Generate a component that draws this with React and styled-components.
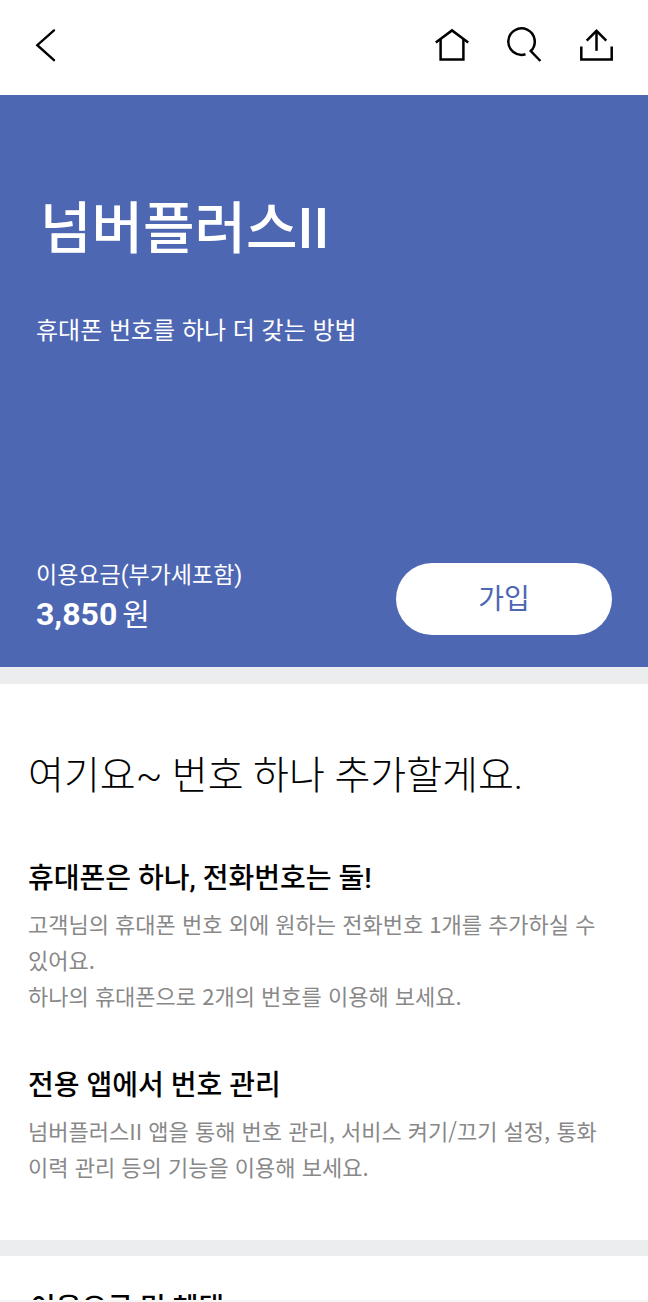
import React, { useState } from "react";
import styled, { createGlobalStyle } from "styled-components";

const GlobalStyle = createGlobalStyle`
  * {
    box-sizing: border-box;
  }
  body {
    margin: 0;
    background-color: #fff;
    color: #000;
    font-family: Roboto, "Noto Sans CJK KR", sans-serif;
    word-break: keep-all;
  }
  h1, h2, h3, p, dl, dd {
    margin: 0;
  }
  p {
    font-family: "Noto Sans CJK KR", sans-serif;
  }
`;

const Screen = styled.div`
  display: flex;
  flex-direction: column;
  height: 100vh;
`;

const TopBar = styled.header`
  display: flex;
  flex-shrink: 0;
  align-items: center;
  justify-content: space-between;
  height: 95px;
  padding: 0 32px 5px 24px;
`;

const TopMenu = styled.nav`
  display: flex;
  gap: 32px;
`;

const IconButton = styled.button`
  display: flex;
  padding: 0;
  border: 0;
  background: none;
  color: #000;
  cursor: pointer;
`;

const Icon = styled.svg`
  display: block;
  width: 40px;
  height: 40px;
  fill: none;
  stroke: currentColor;
  stroke-width: ${({ $weight }) => $weight || 2.5};
`;

const Content = styled.main`
  flex: 1;
  min-height: 0;
  overflow-y: auto;
  scrollbar-width: none;
`;

const BottomEdge = styled.footer`
  flex-shrink: 0;
  height: 2px;
  background-color: #f5f5f5;
`;

const Hero = styled.section`
  display: flex;
  flex-direction: column;
  justify-content: space-between;
  min-height: 572px;
  padding: 92px 36px 30px;
  background-color: #4d67b3;
  color: #fff;
`;

const HeroTitle = styled.h1`
  padding: 0 4px;
  font-size: 56px;
  font-weight: 500;
  line-height: 84px;
`;

const HeroText = styled.p`
  margin-top: 40px;
  font-size: 24px;
  line-height: 36px;
`;

const JoinRow = styled.div`
  display: flex;
  align-items: center;
  justify-content: space-between;
`;

const PriceLabel = styled.dt`
  font-size: 23px;
  line-height: 32px;
`;

const Price = styled.dd`
  font-size: 30px;
  line-height: 44px;

  strong {
    margin-right: 5px;
    font-size: 32px;
    font-weight: 700;
  }
`;

const JoinButton = styled.button`
  width: 216px;
  height: 72px;
  padding: 0 0 4px;
  border: 0;
  border-radius: 36px;
  background-color: #fff;
  color: #4d67b3;
  font-family: inherit;
  font-size: 28px;
  cursor: pointer;
`;

const Divider = styled.div`
  height: ${({ $height }) => $height}px;
  background-color: #ebedee;
`;

const Intro = styled.section`
  padding: 62px 28px 56px;
`;

const IntroTitle = styled.h2`
  font-size: 39px;
  font-weight: 300;
  line-height: 60px;
`;

const Feature = styled.article`
  margin-top: 53px;
`;

const FeatureTitle = styled.h3`
  font-size: 28px;
  font-weight: 500;
  line-height: 40px;
`;

const FeatureText = styled.p`
  margin-top: 6px;
  color: #888;
  font-size: 22px;
  line-height: 36px;
`;

const FoldButton = styled.button`
  display: flex;
  align-items: center;
  justify-content: space-between;
  width: 100%;
  padding: 33px 28px 33px 30px;
  border: 0;
  background: none;
  color: #000;
  font-family: inherit;
  font-size: 28px;
  font-weight: 500;
  line-height: 40px;
  cursor: pointer;
`;

const FoldIcon = styled(Icon)`
  width: 24px;
  height: 24px;
  color: #999;
  transform: ${({ $open }) => ($open ? "none" : "rotate(180deg)")};
`;

const features = [
  {
    title: "휴대폰은 하나, 전화번호는 둘!",
    lines: [
      "고객님의 휴대폰 번호 외에 원하는 전화번호 1개를 추가하실 수 있어요.",
      "하나의 휴대폰으로 2개의 번호를 이용해 보세요.",
    ],
  },
  {
    title: "전용 앱에서 번호 관리",
    lines: [
      "넘버플러스II 앱을 통해 번호 관리, 서비스 켜기/끄기 설정, 통화 이력 관리 등의 기능을 이용해 보세요.",
    ],
  },
];

const App = () => {
  const [open, setOpen] = useState(true);

  return (
    <Screen lang="ko">
      <GlobalStyle />
      <TopBar>
        <IconButton type="button" aria-label="뒤로">
          <Icon viewBox="0 0 40 40" $weight={2.4}>
            <path d="M30 5.4 L13.3 20.2 L30 35.2" strokeLinecap="round" />
          </Icon>
        </IconButton>
        <TopMenu>
          <IconButton type="button" aria-label="홈">
            <Icon viewBox="0 0 40 40">
              <path d="M3.8 17.4 L20 5.4 L36.2 17.4" />
              <path d="M8.6 14 V34.6 H31.4 V14" />
            </Icon>
          </IconButton>
          <IconButton type="button" aria-label="검색">
            <Icon viewBox="0 0 40 40">
              <path d="M21.5 29.2 A13.2 13.2 0 1 1 26.6 26.2" />
              <path d="M25.9 25.2 L36.4 36" />
            </Icon>
          </IconButton>
          <IconButton type="button" aria-label="공유">
            <Icon viewBox="0 0 40 40">
              <path d="M5.3 21.4 V34.6 H35.7 V21.4" />
              <path d="M20.5 25.8 V6" />
              <path d="M10.7 15.6 L20.5 5.8 L30.3 15.6" />
            </Icon>
          </IconButton>
        </TopMenu>
      </TopBar>

      <Content>
        <Hero>
          <div>
            <HeroTitle>넘버플러스II</HeroTitle>
            <HeroText>휴대폰 번호를 하나 더 갖는 방법</HeroText>
          </div>
          <JoinRow>
            <dl>
              <PriceLabel>이용요금(부가세포함)</PriceLabel>
              <Price>
                <strong>3,850</strong>원
              </Price>
            </dl>
            <JoinButton type="button">가입</JoinButton>
          </JoinRow>
        </Hero>

        <Divider $height={17} />

        <Intro>
          <IntroTitle>여기요~ 번호 하나 추가할게요.</IntroTitle>
          {features.map(({ title, lines }) => (
            <Feature key={title}>
              <FeatureTitle>{title}</FeatureTitle>
              <FeatureText>
                {lines.map((line, i) => (
                  <React.Fragment key={line}>
                    {i > 0 && <br />}
                    {line}
                  </React.Fragment>
                ))}
              </FeatureText>
            </Feature>
          ))}
        </Intro>

        <Divider $height={16} />

        <FoldButton
          type="button"
          aria-expanded={open}
          onClick={() => setOpen(!open)}
        >
          이용요금 및 혜택
          <FoldIcon viewBox="0 0 24 24" $open={open}>
            <path d="M2 15 L12 5 L22 15" />
          </FoldIcon>
        </FoldButton>
      </Content>
      <BottomEdge />
    </Screen>
  );
};

export default App;
